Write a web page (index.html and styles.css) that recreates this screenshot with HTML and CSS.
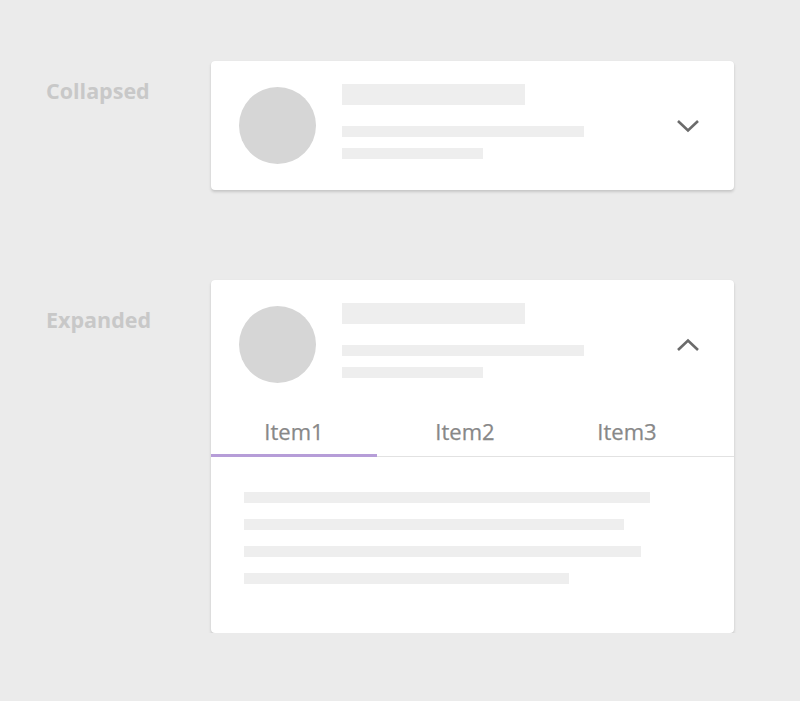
FILE: index.html
```html
<!doctype html>
<html lang="en">
    <head>
        <meta charset="UTF-8">
        <meta name="viewport" content="width=device-width, initial-scale=1.0">
        <title>Accordion card</title>
        <link rel="stylesheet" href="styles.css">
    </head>
    <body>
        <div class="page">
            <div class="row row-collapsed">
                <div class="row-label">Collapsed</div>
                <div class="card">
                    <div class="card-header">
                        <div class="avatar"></div>
                        <div class="header-lines">
                            <div class="bar bar-title"></div>
                            <div class="bar bar-sub"></div>
                            <div class="bar bar-meta"></div>
                        </div>
                        <svg class="chevron" width="24" height="14" viewBox="0 0 24 14">
                            <polyline points="2,2 12,11.5 22,2" fill="none" stroke="#6b6b6b" stroke-width="2.6"/>
                        </svg>
                    </div>
                </div>
            </div>

            <div class="row row-expanded">
                <div class="row-label">Expanded</div>
                <div class="card">
                    <div class="card-header">
                        <div class="avatar"></div>
                        <div class="header-lines">
                            <div class="bar bar-title"></div>
                            <div class="bar bar-sub"></div>
                            <div class="bar bar-meta"></div>
                        </div>
                        <svg class="chevron" width="24" height="14" viewBox="0 0 24 14">
                            <polyline points="2,12 12,2.5 22,12" fill="none" stroke="#6b6b6b" stroke-width="2.6"/>
                        </svg>
                    </div>
                    <div class="tabs">
                        <div class="tab tab-active">Item1</div>
                        <div class="tab">Item2</div>
                        <div class="tab">Item3</div>
                    </div>
                    <div class="card-body">
                        <div class="bar line" style="width: 406px"></div>
                        <div class="bar line" style="width: 380px"></div>
                        <div class="bar line" style="width: 397px"></div>
                        <div class="bar line" style="width: 325px"></div>
                    </div>
                </div>
            </div>
        </div>
    </body>
</html>
```

FILE: styles.css
```css
body {
    margin: 0;
    background: #ebebeb;
    font-family: "Open Sans", Arial, sans-serif;
}

.page {
    padding: 61px 0 0 46px;
}

.row {
    display: flex;
    align-items: flex-start;
}

.row-expanded {
    margin-top: 90px;
}

.row-label {
    width: 165px;
    font-size: 21.5px;
    font-weight: 700;
    color: #c8c8c8;
    line-height: 28px;
}

.row-collapsed .row-label {
    margin-top: 16px;
}

.row-expanded .row-label {
    margin-top: 26px;
}

.card {
    width: 523px;
    background: #fff;
    border-radius: 4px;
    box-shadow: 0 2px 3px rgba(0, 0, 0, .16), 0 0 1px rgba(0, 0, 0, .06);
}

.card-header {
    display: flex;
    align-items: center;
    padding: 26px 34px 26px 28px;
}

.avatar {
    width: 77px;
    height: 77px;
    border-radius: 50%;
    background: #d6d6d6;
    flex-shrink: 0;
}

.header-lines {
    margin-left: 26px;
    align-self: flex-start;
    margin-top: -3px;
}

.bar {
    background: #eeeeee;
}

.bar-title {
    width: 183px;
    height: 21px;
}

.bar-sub {
    width: 242px;
    height: 11px;
    margin-top: 21px;
}

.bar-meta {
    width: 141px;
    height: 11px;
    margin-top: 11px;
}

.chevron {
    margin-left: auto;
    display: block;
}

.tabs {
    display: grid;
    grid-template-columns: 166px 176px 148px;
    border-bottom: 1px solid #e2e2e2;
}

.tab {
    height: 47px;
    padding-bottom: 4px;
    box-sizing: border-box;
    display: flex;
    align-items: center;
    justify-content: center;
    font-size: 22px;
    color: #888;
    -webkit-text-stroke: 0.25px #888;
}

.tab-active {
    box-shadow: inset 0 -3px 0 #b69dd8;
    margin-bottom: -1px;
    height: 48px;
    padding-bottom: 5px;
}

.card-body {
    padding: 35px 33px 49px;
}

.line {
    height: 11px;
}

.line + .line {
    margin-top: 16px;
}
```
